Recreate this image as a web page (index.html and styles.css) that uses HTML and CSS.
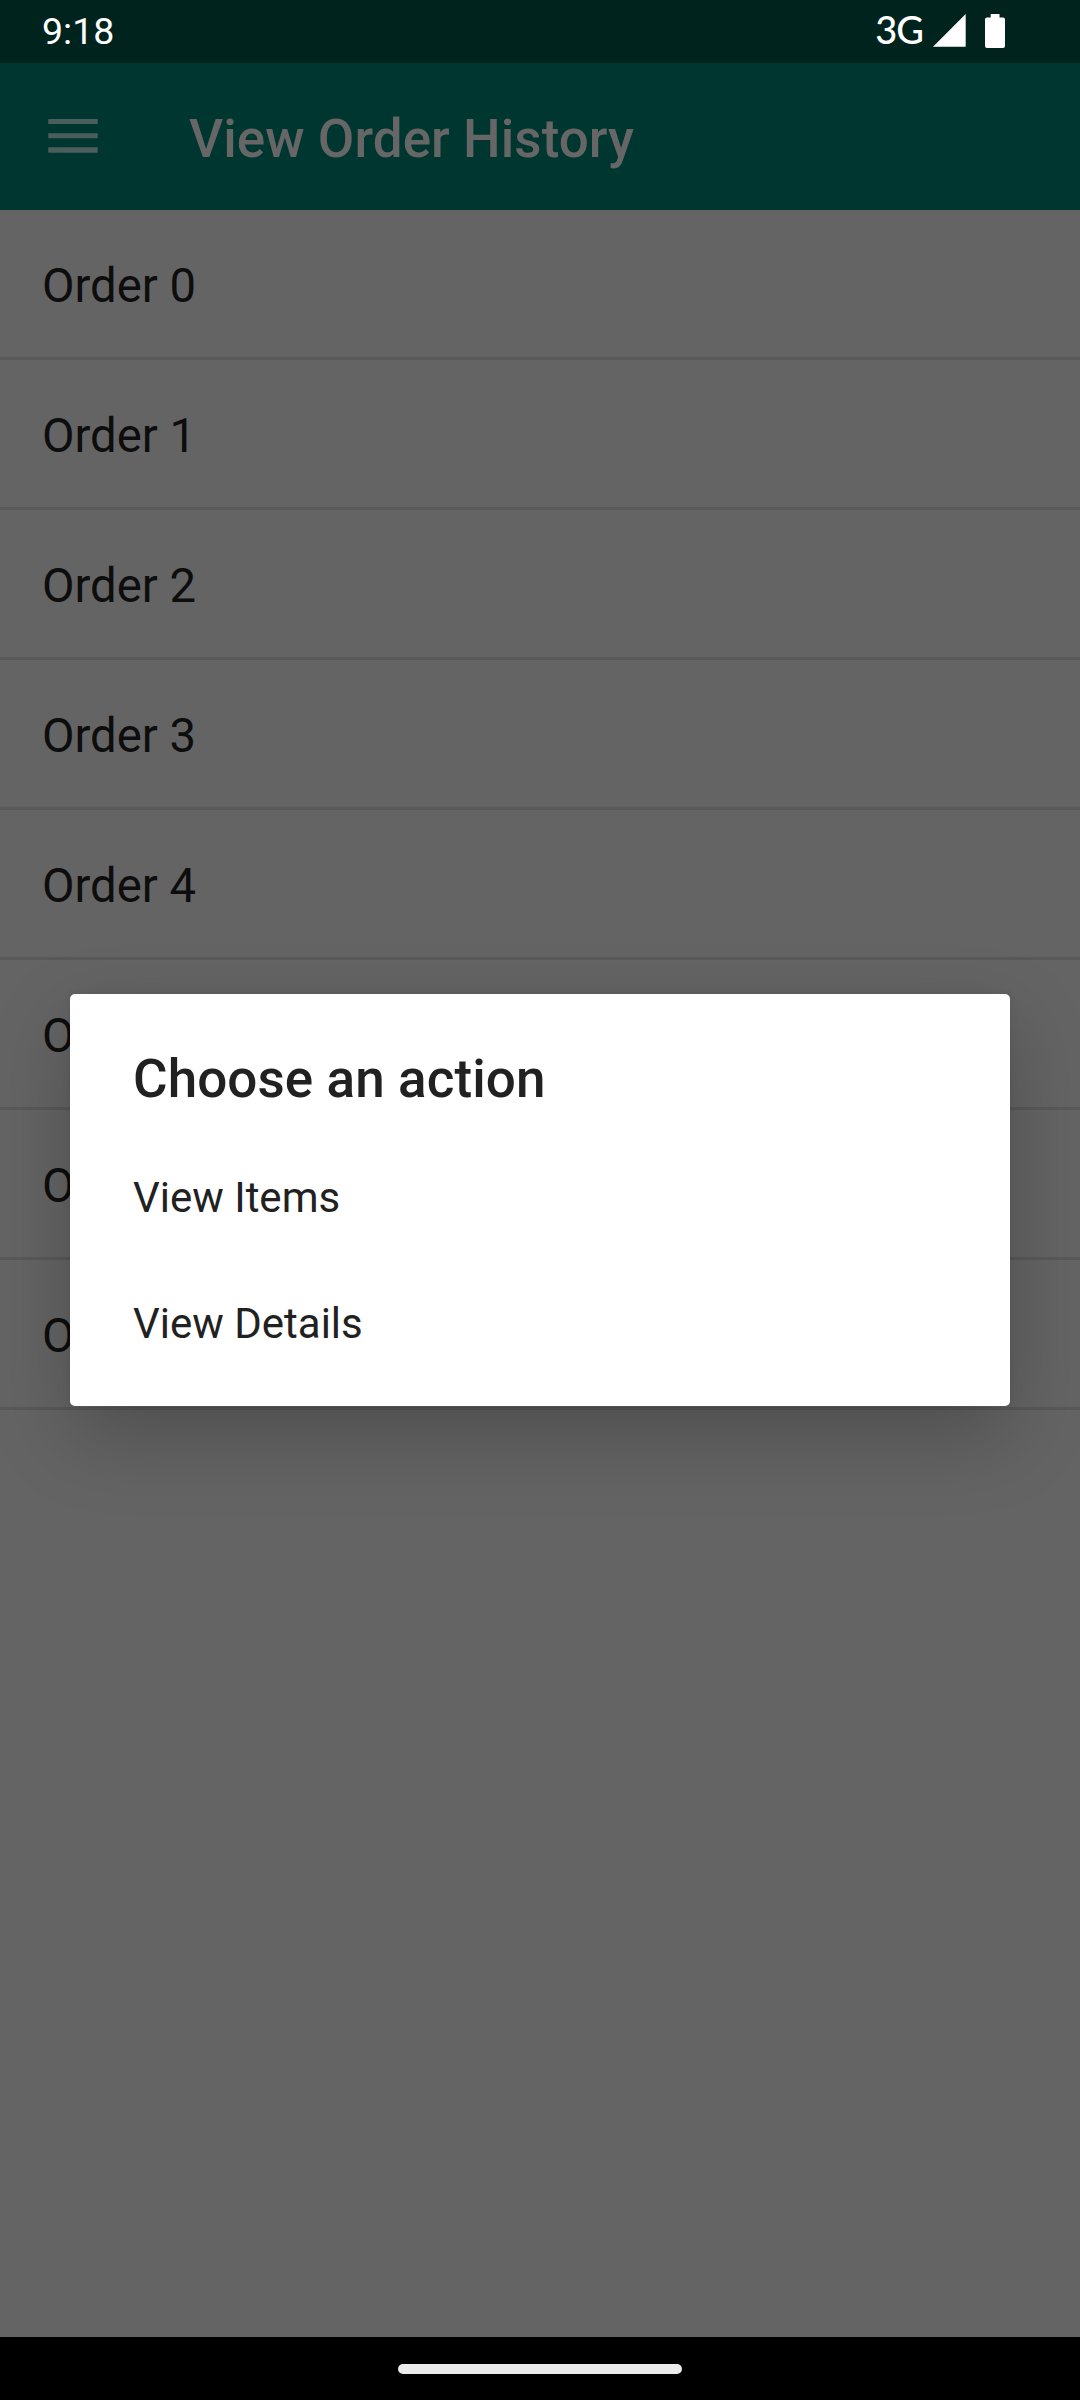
FILE: index.html
```html
<!DOCTYPE html>
<html lang="en">
<head>
<meta charset="utf-8">
<title>View Order History</title>
<link rel="stylesheet" href="styles.css">
</head>
<body>
<div class="screen">
  <header class="status-bar">
    <span class="clock">9:18</span>
    <div class="status-icons">
      <span class="network">3G</span>
      <svg class="signal" width="33" height="33" viewBox="0 0 33 33"><path d="M0 32.7 32.7 0v32.7z" fill="#fff"/></svg>
      <svg class="battery" width="20" height="34" viewBox="0 0 20 34"><path d="M5.7 0h8.8v3.5H18a2 2 0 0 1 2 2V32a2 2 0 0 1-2 2H2a2 2 0 0 1-2-2V5.500a2 2 0 0 1 2-2h3.700z" fill="#fff"/></svg>
    </div>
  </header>
  <div class="app-bar">
    <svg class="menu" width="50" height="34" viewBox="0 0 50 34"><path d="M.3 0h49.400v5H.3zM.3 14.200h49.400v5H.3zM.3 28.300h49.400v5.500H.3z" fill="#4c5e5c"/></svg>
    <h1 class="app-title">View Order History</h1>
  </div>
  <ul class="orders">
    <li class="order">Order 0</li>
    <li class="order">Order 1</li>
    <li class="order">Order 2</li>
    <li class="order">Order 3</li>
    <li class="order">Order 4</li>
    <li class="order">Order 5</li>
    <li class="order">Order 6</li>
    <li class="order">Order 7</li>
  </ul>
  <footer class="nav-bar"><div class="nav-handle"></div></footer>
  <div class="dialog" role="dialog">
    <h2 class="dialog-title">Choose an action</h2>
    <div class="action">View Items</div>
    <div class="action">View Details</div>
  </div>
</div>
</body>
</html>
```
FILE: styles.css
```css
* { box-sizing: border-box; }
body { margin: 0; font-family: Roboto, sans-serif; }
.screen {
  position: relative;
  display: flex;
  flex-direction: column;
  width: 1080px;
  height: 2400px;
  overflow: hidden;
  background: #646464;
}
.status-bar {
  display: flex;
  justify-content: space-between;
  height: 63px;
  padding: 0 75px 0 42px;
  background: #00231d;
  color: #fff;
}
.clock { font-size: 37.5px; line-height: 62px; }
.status-icons { display: flex; align-items: flex-start; }
.network {
  margin-right: 10px;
  font-family: Lato, sans-serif;
  font-size: 38px;
  font-weight: 500;
  line-height: 59px;
  letter-spacing: -1px;
}
.signal { margin: 14px 19px 0 0; }
.battery { margin-top: 14px; }
.app-bar {
  display: flex;
  align-items: flex-start;
  height: 147px;
  padding-left: 48px;
  background: #003630;
}
.menu { margin-top: 56px; }
.app-title {
  margin: 5px 0 0 91px;
  color: #666;
  font-size: 53px;
  font-weight: 500;
  line-height: 142px;
  letter-spacing: .05px;
}
.orders { flex: 1; margin: 0; padding: 0; list-style: none; }
.order {
  height: 150px;
  padding: 5px 42px 0;
  border-bottom: 3px solid #595959;
  color: #0d0d0d;
  font-size: 47.25px;
  line-height: 143px;
}
.nav-bar {
  display: flex;
  justify-content: center;
  height: 63px;
  padding-top: 27px;
  background: #000;
}
.nav-handle { width: 284px; height: 10px; border-radius: 5px; background: #ebebeb; }
.dialog {
  position: absolute;
  top: 994px;
  left: 70px;
  width: 940px;
  height: 412px;
  padding: 50px 63px 0;
  border-radius: 5px;
  background: #fff;
  color: #212121;
  box-shadow: 0 30px 80px rgba(0, 0, 0, .21), 0 0 8px rgba(0, 0, 0, .08);
}
.dialog-title {
  margin: 0 0 21px;
  font-size: 53px;
  font-weight: 500;
  line-height: 70px;
  letter-spacing: .08px;
}
.action { height: 126px; font-size: 42px; line-height: 126px; }
```
